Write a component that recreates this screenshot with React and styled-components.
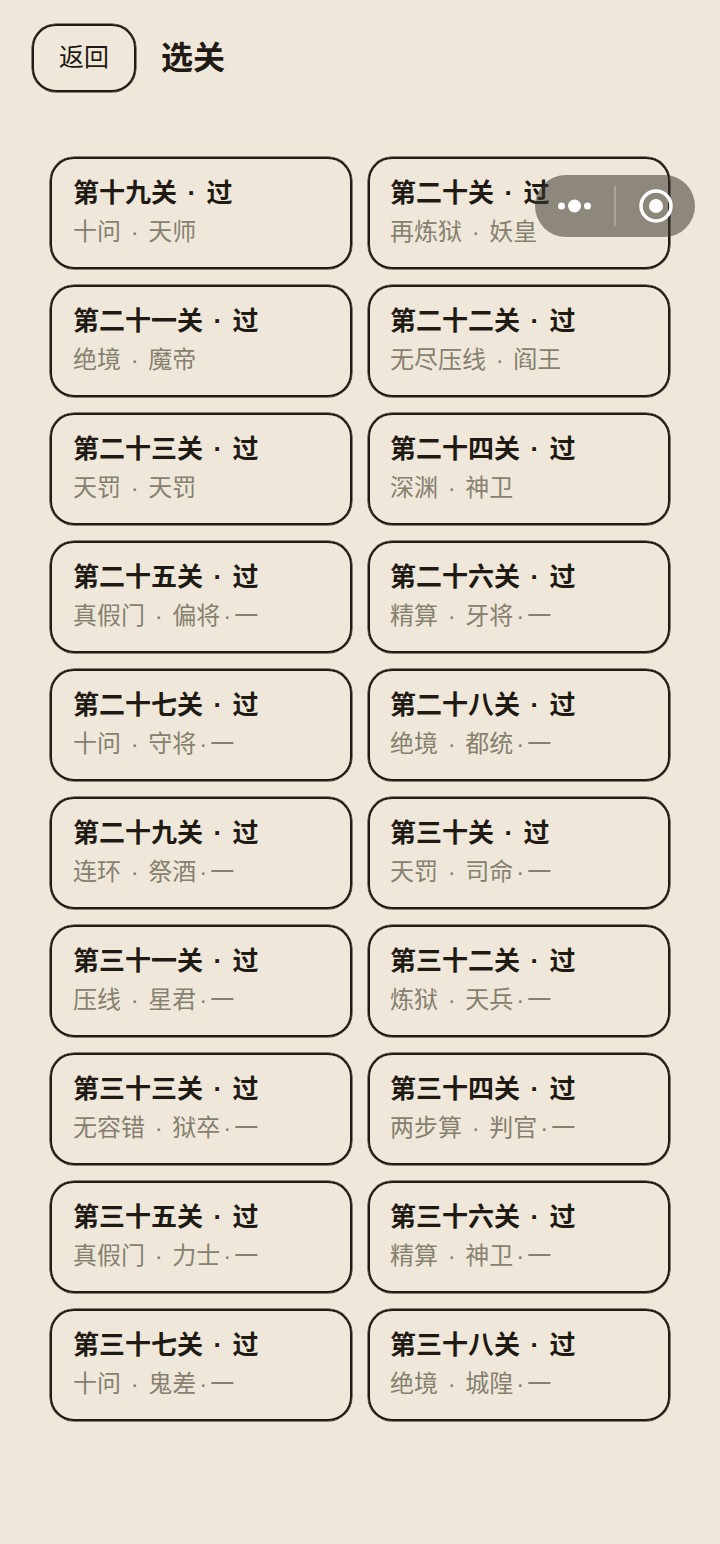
import React from 'react';
import styled, { createGlobalStyle } from 'styled-components';

const GlobalStyle = createGlobalStyle`
  html, body {
    margin: 0;
    padding: 0;
    background: #efe8da;
  }
  body {
    font-family: "Liberation Sans", "Noto Sans CJK SC", sans-serif;
    color: #1f1a14;
  }
`;

const Page = styled.div`
  position: relative;
  width: 720px;
  height: 1544px;
  overflow: hidden;
  background: #efe8da;
`;

const Header = styled.header`
  display: flex;
  align-items: center;
  gap: 25px;
  padding: 24px 32px 0;
`;

const BackButton = styled.button`
  box-sizing: border-box;
  width: 104px;
  height: 68px;
  padding: 0 0 1px;
  border: 2px solid #1f1a14;
  border-radius: 24px;
  box-shadow: 0 0 0 0.5px #1f1a14;
  background: transparent;
  color: #1f1a14;
  font-family: inherit;
  font-size: 25px;
  line-height: 1;
`;

const Title = styled.h1`
  margin: 0;
  font-size: 32px;
  font-weight: 700;
  line-height: 1;
`;

const LevelGrid = styled.div`
  display: grid;
  grid-template-columns: 302px 302px;
  grid-auto-rows: 112px;
  gap: 16px;
  padding: 65px 0 0 50px;
`;

const LevelCard = styled.div`
  box-sizing: border-box;
  display: flex;
  flex-direction: column;
  padding: 16px 20px 0 ${(p) => p.$inset}px;
  border: 2px solid #1f1a14;
  border-radius: 24px;
  box-shadow: 0 0 0 0.5px #1f1a14;
`;

const LevelName = styled.div`
  font-size: 26px;
  font-weight: 700;
  line-height: 36px;
  white-space: pre;
`;

const LevelInfo = styled.div`
  margin-top: 3px;
  font-size: 24px;
  line-height: 36px;
  color: #86806f;
  white-space: pre;
`;

// the middle dot is narrower than a full CJK cell in the reference
const Dot = styled.span`
  display: inline-block;
  width: 0.58em;
  text-align: center;
`;

const Capsule = styled.div`
  position: absolute;
  top: 175px;
  left: 535px;
  display: flex;
  align-items: center;
  width: 160px;
  height: 62px;
  border-radius: 31px;
  background: rgba(60, 55, 48, 0.55);
`;

const CapsulePart = styled.div`
  display: flex;
  flex: 0 0 ${(p) => p.$width}px;
  align-items: center;
  justify-content: center;
  height: 100%;
`;

const Divider = styled.div`
  flex: none;
  width: 2px;
  height: 40px;
  background: rgba(255, 255, 255, 0.25);
`;

const levels = [
  ['第十九关', '十问', '天师'],
  ['第二十关', '再炼狱', '妖皇'],
  ['第二十一关', '绝境', '魔帝'],
  ['第二十二关', '无尽压线', '阎王'],
  ['第二十三关', '天罚', '天罚'],
  ['第二十四关', '深渊', '神卫'],
  ['第二十五关', '真假门', '偏将', '一'],
  ['第二十六关', '精算', '牙将', '一'],
  ['第二十七关', '十问', '守将', '一'],
  ['第二十八关', '绝境', '都统', '一'],
  ['第二十九关', '连环', '祭酒', '一'],
  ['第三十关', '天罚', '司命', '一'],
  ['第三十一关', '压线', '星君', '一'],
  ['第三十二关', '炼狱', '天兵', '一'],
  ['第三十三关', '无容错', '狱卒', '一'],
  ['第三十四关', '两步算', '判官', '一'],
  ['第三十五关', '真假门', '力士', '一'],
  ['第三十六关', '精算', '神卫', '一'],
  ['第三十七关', '十问', '鬼差', '一'],
  ['第三十八关', '绝境', '城隍', '一'],
];

const App = () => (
  <Page>
    <GlobalStyle />
    <Header>
      <BackButton>返回</BackButton>
      <Title>选关</Title>
    </Header>
    <LevelGrid>
      {levels.map(([name, mode, boss, rank], i) => (
        <LevelCard key={name} $inset={i % 2 === 0 ? 21 : 20}>
          <LevelName>{name} <Dot>·</Dot> 过</LevelName>
          <LevelInfo>
            {mode} <Dot>·</Dot> {boss}
            {rank && <><Dot>·</Dot>{rank}</>}
          </LevelInfo>
        </LevelCard>
      ))}
    </LevelGrid>
    <Capsule>
      <CapsulePart $width={79}>
        <svg width="36" height="16" viewBox="0 0 36 16">
          <circle cx="4.5" cy="8" r="3.5" fill="#fff" />
          <circle cx="17.5" cy="8" r="6.5" fill="#fff" />
          <circle cx="30.5" cy="8" r="3.5" fill="#fff" />
        </svg>
      </CapsulePart>
      <Divider />
      <CapsulePart $width={79}>
        <svg width="36" height="36" viewBox="0 0 36 36">
          <circle cx="18" cy="18" r="15" fill="none" stroke="#fff" strokeWidth="3.5" />
          <circle cx="18" cy="18" r="7" fill="#fff" />
        </svg>
      </CapsulePart>
    </Capsule>
  </Page>
);

export default App;
